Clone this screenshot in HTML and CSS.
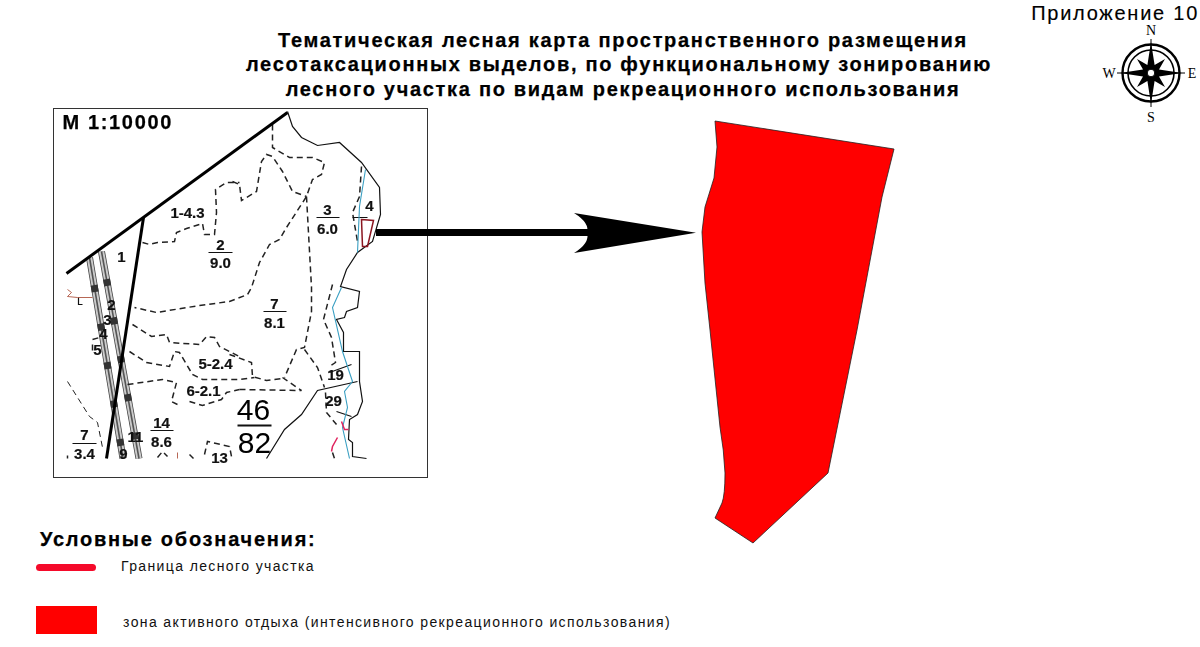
FILE: index.html
```html
<!DOCTYPE html>
<html lang="ru">
<head>
<meta charset="utf-8">
<title>Приложение 10</title>
<link rel="stylesheet" href="styles.css">
</head>
<body>
<main class="sheet">
  <header class="top">
    <h1 class="title"><span class="t1">Тематическая лесная карта пространственного размещения</span><span class="t2">лесотаксационных выделов, по функциональному зонированию</span><span class="t3">лесного участка по видам рекреационного использования</span></h1>
    <div class="side">
      <div class="appendix">Приложение 10</div>
      <svg class="compass" width="100" height="100" viewBox="0 0 100 100" role="img" aria-label="Компас">
        <g transform="translate(51,50)">
          <line class="c-line" x1="-34" y1="0" x2="34" y2="0"/>
          <line class="c-line" x1="0" y1="-34" x2="0" y2="34"/>
          <circle class="c-outer" r="28.5"/>
          <circle class="c-inner" r="23"/>
          <path class="c-star" d="M0,-31 L3.6,-8 L14,-14 L8,-3.6 L31,0 L8,3.6 L14,14 L3.6,8 L0,31 L-3.6,8 L-14,14 L-8,3.6 L-31,0 L-8,-3.6 L-14,-14 L-3.6,-8 Z"/>
          <circle class="c-hub" r="3.8"/>
        </g>
        <text class="c-text" x="51" y="12">N</text>
        <text class="c-text" x="9" y="55">W</text>
        <text class="c-text" x="92" y="55">E</text>
        <text class="c-text" x="51" y="99">S</text>
      </svg>
    </div>
  </header>

  <section class="map-frame">
    <svg class="map" width="372" height="367" viewBox="54.5 109.5 372 367" role="img" aria-label="Карта">
      <g class="rail">
        <path class="r1" d="M90,258L123.5,459"/><path class="r2" d="M90,258L123.5,459"/><path class="r3" d="M90,258L123.5,459"/><path class="r4" d="M90,258L123.5,459"/>
        <path class="r1" d="M102,252L139.5,459"/><path class="r2" d="M102,252L139.5,459"/><path class="r3" d="M102,252L139.5,459"/><path class="r4" d="M102,252L139.5,459"/>
      </g>
      <g class="dash">
        <path d="M143,243L150,245L158,243L175,242L177,233L187,229L203,224L205,235L215,235L217,213L216,190L227,183L240,183"/>
        <path d="M233,182L240,185L242,201L257,192L262,162L267,155L273,157L283,172L293,192L307,197"/>
        <path d="M273,125L273,148L290,158L313,158L325,163L322,175L313,180L307,197L287,228L280,240L270,245L260,263L252,288L248,295L230,302L200,306L157,313L135,308"/>
        <path d="M307,197L312,288L312,312L305,348L297,350L285,378"/>
        <path d="M305,350L318,368L325,388"/>
        <path d="M283,378L302,391"/>
        <path d="M230,355L252,363L253,377L267,381L283,379"/>
        <path d="M240,390L302,391"/>
        <path d="M133,325L152,337L167,335L170,343L200,345L207,337L215,338L220,347L240,357"/>
        <path d="M130,352L147,363L170,367L175,352L180,353L193,375L203,380L240,380L255,378"/>
        <path d="M128,385L163,380L177,383L172,402L178,405"/>
        <path d="M190,402L203,406L222,400L227,393L240,390"/>
        <path class="fine" d="M68,382L90,417L98,423L103,448"/>
        <path d="M205,455L208,442L230,447L232,457"/>
        <path d="M158,458L163,452L168,457M190,455L194,459"/>
        <path d="M93,340L100,338M93,345L93,353"/>
        <path d="M362,167L360,197L353,213L358,242"/>
        <path d="M333,285L324,320L332,338L336,363L330,367"/>
        <path d="M326,393L327,413L337,425"/>
        <path d="M333,453L335,459"/>
        <path d="M68,456L68,459"/>
      </g>
      <g class="thick">
        <path d="M67,274L288,113"/>
        <path d="M144,218L107,459"/>
      </g>
      <g class="thin">
        <path d="M288,112L293,127L302,138L318,146L340,143L362,163L380,188L381,215L373,242L358,253L347,270L341,287L360,292L358,308L347,312L345,318L337,320L344,333L344,352L360,352L360,382L363,402L358,415L350,420L349,440L353,443L353,457L367,459"/>
        <path d="M358,382L318,391L302,415L285,430L267,459"/>
        <path d="M352,365L330,373M337,412L352,417M353,218L368,218M79,298L79,305L83,305"/>
      </g>
      <path class="blue" d="M366,170L360,207L358,253M342,288L333,308L343,352L353,382L345,392L348,408L343,428L350,459"/>
      <path class="brown" d="M68,290L72,293L68,297L78,298L93,298M178,453L178,459"/>
      <path class="darkred" d="M362,220L374,221L368,247L363,247Z"/>
      <path class="pink" d="M342,422L345,430L349,430M338,438L333,447L332,452"/>
      <g class="rule">
        <path d="M209,253H233M317,218H340M264,312H287M151,431H174M73,444H97"/>
      </g>
      <path class="rule-big" d="M238,426H272"/>
      <text class="m-scale" x="63" y="129">М 1:10000</text>
      <g class="lab">
        <text x="188" y="218">1-4.3</text>
        <text x="122" y="262">1</text>
        <text x="221" y="250">2</text><text x="221" y="268">9.0</text>
        <text x="328" y="215">3</text><text x="328" y="234">6.0</text>
        <text x="370" y="211">4</text>
        <text x="275" y="309">7</text><text x="275" y="328">8.1</text>
        <text x="216" y="369">5-2.4</text>
        <text x="204" y="396">6-2.1</text>
        <text x="162" y="428">14</text><text x="162" y="447">8.6</text>
        <text x="85" y="440">7</text><text x="85" y="459">3.4</text>
        <text x="112" y="310">2</text><text x="108" y="325">3</text><text x="104" y="339">4</text><text x="98" y="355">5</text>
        <text x="136" y="442">11</text><text x="124" y="459">9</text>
        <text x="220" y="463">13</text>
        <text x="336" y="380">19</text><text x="334" y="406">29</text>
      </g>
      <text class="big" x="254" y="420">46</text>
      <text class="big" x="255" y="453">82</text>
    </svg>
  </section>

  <svg class="overlay" width="1200" height="647" viewBox="0 0 1200 647" aria-hidden="true">
    <path class="zone" d="M715,121L894,149L882,197L857,330L828,473L753,543L715,518L722,503Q725,495 725,473Q724,450 720,427L710,330L705,283L702,232L705,207L714,178L717,147Z"/>
    <path class="arrow" d="M376,229H590V236H376Z"/>
    <path class="arrow" d="M574,213L696,232.7L574,253Q590,243 587,233Q590,223 574,213Z"/>
  </svg>

  <section class="legend">
    <h2 class="legend-title">Условные обозначения:</h2>
    <div class="legend-row row-line">
      <span class="swatch-line"></span>
      <span class="legend-text text-line">Граница лесного участка</span>
    </div>
    <div class="legend-row row-zone">
      <span class="swatch-zone"></span>
      <span class="legend-text text-zone">зона активного отдыха (интенсивного рекреационного использования)</span>
    </div>
  </section>
</main>
</body>
</html>
```
FILE: styles.css
```css
* { box-sizing: border-box; }
html, body { margin: 0; padding: 0; background: #fff; }
.sheet {
  position: relative;
  width: 1200px;
  height: 647px;
  overflow: hidden;
  font-family: "Liberation Sans", Arial, sans-serif;
  color: #000;
}
.top { display: flex; height: 108px; }
.title {
  margin: 28px 0 0 223px;
  width: 800px;
  display: flex;
  flex-direction: column;
  align-items: center;
  font-size: 20px;
  line-height: 24.4px;
  font-weight: 700;
  letter-spacing: 1.7px;
  white-space: nowrap;
  -webkit-text-stroke: .25px #000;
}
.t2 { margin-right: 8px; }
.side {
  margin-left: auto;
  padding: 3px 1px 0 0;
  display: flex;
  flex-direction: column;
  align-items: flex-end;
}
.appendix { font-size: 20px; line-height: 21px; letter-spacing: 1.75px; white-space: nowrap; -webkit-text-stroke: .15px #000; }
.compass { margin-right: -1px; margin-top: -1px; flex: none; overflow: visible; }
.c-line { stroke: #000; stroke-width: 1; }
.c-outer { fill: none; stroke: #000; stroke-width: 2.4; }
.c-inner { fill: none; stroke: #000; stroke-width: 1.6; }
.c-star { fill: #000; }
.c-hub { fill: #fff; stroke: #000; stroke-width: 1; }
.c-text { font-family: "Liberation Serif", serif; font-size: 14px; text-anchor: middle; fill: #000; }

.map-frame {
  margin-left: 53px;
  width: 375px;
  height: 370px;
  border: 1.5px solid #333;
}
.map { display: block; overflow: hidden; filter: blur(.3px); }
.map path { fill: none; }
.r1 { stroke: #444; stroke-width: 7; }
.r2 { stroke: #ccc; stroke-width: 5.4; }
.r3 { stroke: #555; stroke-width: 1.6; }
.r4 { stroke: #333; stroke-width: 7; stroke-dasharray: 7 32; stroke-dashoffset: -28; }
.dash path { stroke: #222; stroke-width: 1.5; stroke-dasharray: 6 4; }
.dash .fine { stroke-width: 1; }
.thick path { stroke: #000; stroke-width: 3; }
.thin path { stroke: #111; stroke-width: 1.2; }
.map .blue { stroke: #3a9fc2; stroke-width: 1.1; }
.map .brown { stroke: #a5402a; stroke-width: .8; }
.map .darkred { stroke: #8b1620; stroke-width: 1.5; }
.map .pink { stroke: #e0245e; stroke-width: 1.5; }
.rule path { stroke: #111; stroke-width: 1.2; }
.map .rule-big { stroke: #111; stroke-width: 1.8; }
.m-scale { font-size: 20px; font-weight: 700; letter-spacing: 1.65px; fill: #000; stroke: #000; stroke-width: .25px; }
.lab text { font-size: 15px; font-weight: 700; text-anchor: middle; fill: #111; stroke: #111; stroke-width: .2px; }
.big { font-size: 30px; text-anchor: middle; fill: #000; }

.overlay { position: absolute; left: 0; top: 0; pointer-events: none; }
.zone { fill: #f00; stroke: #222; stroke-width: .8; }
.arrow { fill: #000; }

.legend { margin: 50px 0 0 40px; }
.legend-title {
  margin: 0;
  font-size: 20px;
  line-height: 23px;
  font-weight: 700;
  letter-spacing: 1.75px;
  white-space: nowrap;
  -webkit-text-stroke: .25px #000;
}
.legend-row { display: flex; margin-left: -4px; align-items: center; }
.row-line { margin-top: 12px; height: 8px; }
.row-zone { margin-top: 35px; height: 28px; }
.swatch-line { width: 60px; height: 7px; border-radius: 4px; background: #f50a2a; flex: none; }
.swatch-zone { width: 61px; height: 28px; background: #f00; flex: none; }
.legend-text { font-size: 14px; letter-spacing: 1.38px; white-space: nowrap; color: #111; }
.text-line { margin-left: 25px; margin-bottom: 3px; }
.text-zone { margin-left: 26px; margin-top: 4px; }
```
